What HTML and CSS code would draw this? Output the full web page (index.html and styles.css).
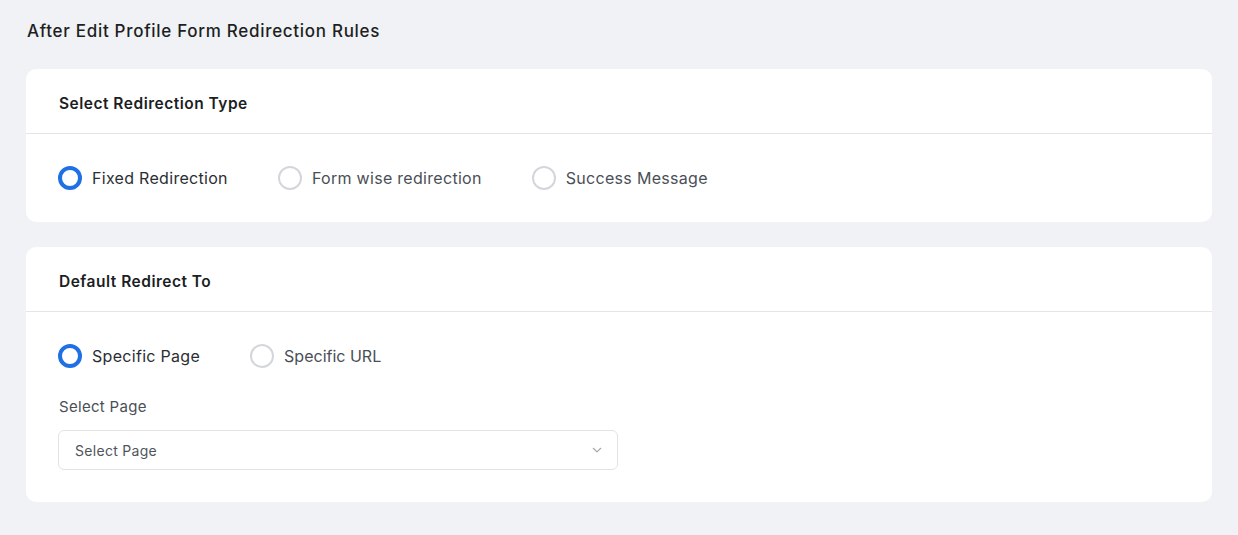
FILE: index.html
```html
<!DOCTYPE html>
<html lang="en">
<head>
<meta charset="utf-8">
<title>Redirection Rules</title>
<link rel="stylesheet" href="styles.css">
</head>
<body>
<main class="page">
  <h1 class="page-title">After Edit Profile Form Redirection Rules</h1>

  <section class="card">
    <header class="card-header">
      <h2 class="card-title">Select Redirection Type</h2>
    </header>
    <div class="card-body card-body--types">
      <div class="radio-group">
        <label class="radio radio--checked"><span class="radio-dot"></span><span class="radio-label">Fixed Redirection</span></label>
        <label class="radio"><span class="radio-dot"></span><span class="radio-label">Form wise redirection</span></label>
        <label class="radio"><span class="radio-dot"></span><span class="radio-label">Success Message</span></label>
      </div>
    </div>
  </section>

  <section class="card">
    <header class="card-header">
      <h2 class="card-title">Default Redirect To</h2>
    </header>
    <div class="card-body card-body--default">
      <div class="radio-group">
        <label class="radio radio--checked"><span class="radio-dot"></span><span class="radio-label">Specific Page</span></label>
        <label class="radio"><span class="radio-dot"></span><span class="radio-label radio-label--url">Specific URL</span></label>
      </div>
      <div class="field">
        <div class="field-label">Select Page</div>
        <div class="select">
          <span class="select-value">Select Page</span>
          <svg class="select-caret" width="12" height="12" viewBox="0 0 12 12" fill="none"><path d="M2.3 4.3 L6 7.9 L9.7 4.3" stroke="#a3a8b0" stroke-width="1.2" stroke-linecap="round" stroke-linejoin="round"/></svg>
        </div>
      </div>
    </div>
  </section>
</main>
</body>
</html>
```

FILE: styles.css
```css
* { box-sizing: border-box; }
html, body { margin: 0; padding: 0; }
body {
  background: #f1f2f6;
  font-family: "Inter", "Noto Sans", sans-serif;
  color: #1f2328;
}
.page {
  padding: 20px 26px 0 26px;
  display: flex;
  flex-direction: column;
  gap: 25px;
}
.page-title {
  margin: 0 0 0 1px;
  font-size: 17px;
  font-weight: 500;
  letter-spacing: 0.7px;
  line-height: 22px;
  color: #1d1f23;
  height: 24px;
}
.card {
  background: #fff;
  border-radius: 10px;
}
.card-header {
  height: 65px;
  padding: 5px 32px 0 33px;
  display: flex;
  align-items: center;
  border-bottom: 1px solid #e3e5e9;
}
.card-title {
  margin: 0;
  font-size: 15.5px;
  font-weight: 600;
  letter-spacing: 0.5px;
  color: #1b1e23;
}
.card-body { padding: 0 32px; }
.card-body--types { height: 88px; display: flex; align-items: center; }
.card-body--default { padding-top: 32px; padding-bottom: 32px; }
.radio-group { display: flex; align-items: center; gap: 50px; }
.radio {
  display: flex;
  align-items: center;
  gap: 10px;
  cursor: pointer;
}
.radio-dot {
  width: 24px;
  height: 24px;
  border-radius: 50%;
  border: 2px solid #d3d6db;
  background: #fff;
}
.radio--checked .radio-dot { border: 4px solid #1f6fe5; }
.radio-label {
  font-size: 16px;
  letter-spacing: 0.3px;
  color: #4a4f57;
  line-height: 24px;
}
.radio-label--url { letter-spacing: 0; }
.radio--checked .radio-label { color: #2a2e34; }
.field { margin-top: 29px; }
.field-label {
  font-size: 15px;
  letter-spacing: 0.3px;
  color: #4a4f57;
  line-height: 20px;
  padding-left: 1px;
}
.select {
  margin-top: 13px;
  width: 560px;
  height: 40px;
  border: 1px solid #e1e3e7;
  border-radius: 6px;
  display: flex;
  align-items: center;
  justify-content: space-between;
  padding: 0 14px 0 16px;
}
.select-value { font-size: 14px; letter-spacing: 0.3px; color: #50555c; }
.select-caret { display: block; }
```
